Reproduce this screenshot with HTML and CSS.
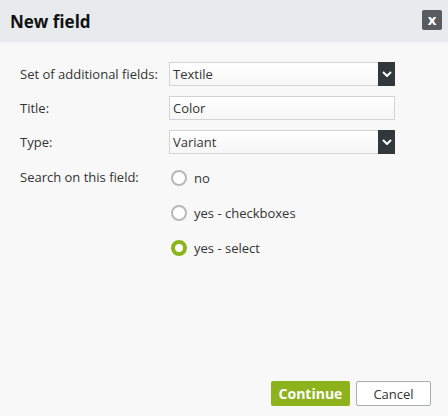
FILE: index.html
```html
<!DOCTYPE html>
<html>
<head>
<meta charset="utf-8">
<link rel="stylesheet" href="styles.css">
</head>
<body>
<div class="dialog">
  <div class="header">
    <div class="title">New field</div>
    <div class="close">x</div>
  </div>
  <div class="body">
    <div class="row">
      <div class="label">Set of additional fields:</div>
      <div class="select"><span class="val">Textile</span><span class="arrow"><svg width="10" height="6" viewBox="0 0 10 6"><path d="M1 1 L5 5 L9 1" stroke="#fff" stroke-width="2" fill="none"/></svg></span></div>
    </div>
    <div class="row">
      <div class="label">Title:</div>
      <div class="input">Color</div>
    </div>
    <div class="row">
      <div class="label">Type:</div>
      <div class="select"><span class="val">Variant</span><span class="arrow"><svg width="10" height="6" viewBox="0 0 10 6"><path d="M1 1 L5 5 L9 1" stroke="#fff" stroke-width="2" fill="none"/></svg></span></div>
    </div>
    <div class="row radios-row">
      <div class="label">Search on this field:</div>
      <div class="radios">
        <div class="radio"><span class="circle"></span>no</div>
        <div class="radio"><span class="circle"></span>yes - checkboxes</div>
        <div class="radio"><span class="circle checked"></span>yes - select</div>
      </div>
    </div>
  </div>
  <div class="footer">
    <div class="btn primary">Continue</div>
    <div class="btn secondary">Cancel</div>
  </div>
</div>
</body>
</html>
```
FILE: styles.css
```css
html, body {
  margin: 0;
  padding: 0;
}
body {
  font-family: "Open Sans", "Liberation Sans", sans-serif;
  font-size: 13px;
  color: #333;
  background: #f8f8f8;
}
.dialog {
  width: 448px;
  height: 416px;
  display: flex;
  flex-direction: column;
  background: #f8f8f8;
}
.header {
  height: 42px;
  background: #e8ebee;
  display: flex;
  align-items: center;
  justify-content: space-between;
  padding: 0 6px 0 10px;
  box-sizing: border-box;
}
.title {
  font-size: 17px;
  font-weight: bold;
  color: #111;
  margin-top: 1px;
}
.close {
  width: 20px;
  height: 20px;
  background: #575b60;
  color: #fff;
  border-radius: 2px;
  font-weight: bold;
  font-size: 15px;
  line-height: 18px;
  text-align: center;
  margin-top: -2px;
}
.body {
  flex: 1;
  padding: 20px 53px 0 20px;
  display: flex;
  flex-direction: column;
  gap: 10px;
}
.row {
  display: flex;
  align-items: center;
  height: 24px;
}
.label {
  width: 149px;
  flex: none;
  color: #333;
}
.select, .input {
  flex: 1;
  height: 24px;
  box-sizing: border-box;
  border: 1px solid #d3d3d3;
  background: linear-gradient(#fff, #f6f6f6);
  display: flex;
  align-items: center;
  color: #333;
  font-size: 13px;
}
.val { flex: 1; padding-left: 3px; }
.input { padding-left: 3px; }
.arrow {
  width: 17px;
  height: 24px;
  margin: -1px -1px -1px 0;
  background: #32373a;
  display: flex;
  align-items: center;
  justify-content: center;
}
.radios-row {
  align-items: flex-start;
  height: auto;
}
.radios-row .label { margin-top: 4px; }
.radios {
  display: flex;
  flex-direction: column;
  gap: 15px;
  margin-top: 4px;
}
.radio {
  display: flex;
  align-items: center;
  height: 20px;
  margin-left: 2px;
}
.circle {
  width: 16px;
  height: 16px;
  box-sizing: border-box;
  border: 2px solid #b8b8b8;
  border-radius: 50%;
  background: #fff;
  margin-right: 7px;
}
.circle.checked {
  border: 4px solid #8ab41c;
  background: #fff;
}
.footer {
  display: flex;
  justify-content: flex-end;
  gap: 6px;
  padding: 0 17px 10px 0;
}
.btn {
  height: 25px;
  box-sizing: border-box;
  display: flex;
  align-items: center;
  justify-content: center;
  border-radius: 2px;
  font-size: 13px;
}
.primary {
  width: 79px;
  background: #8db21c;
  color: #fff;
  font-weight: bold;
  font-size: 14px;
}
.secondary {
  width: 75px;
  background: #fff;
  border: 1px solid #a9acb4;
  color: #333;
}
```
